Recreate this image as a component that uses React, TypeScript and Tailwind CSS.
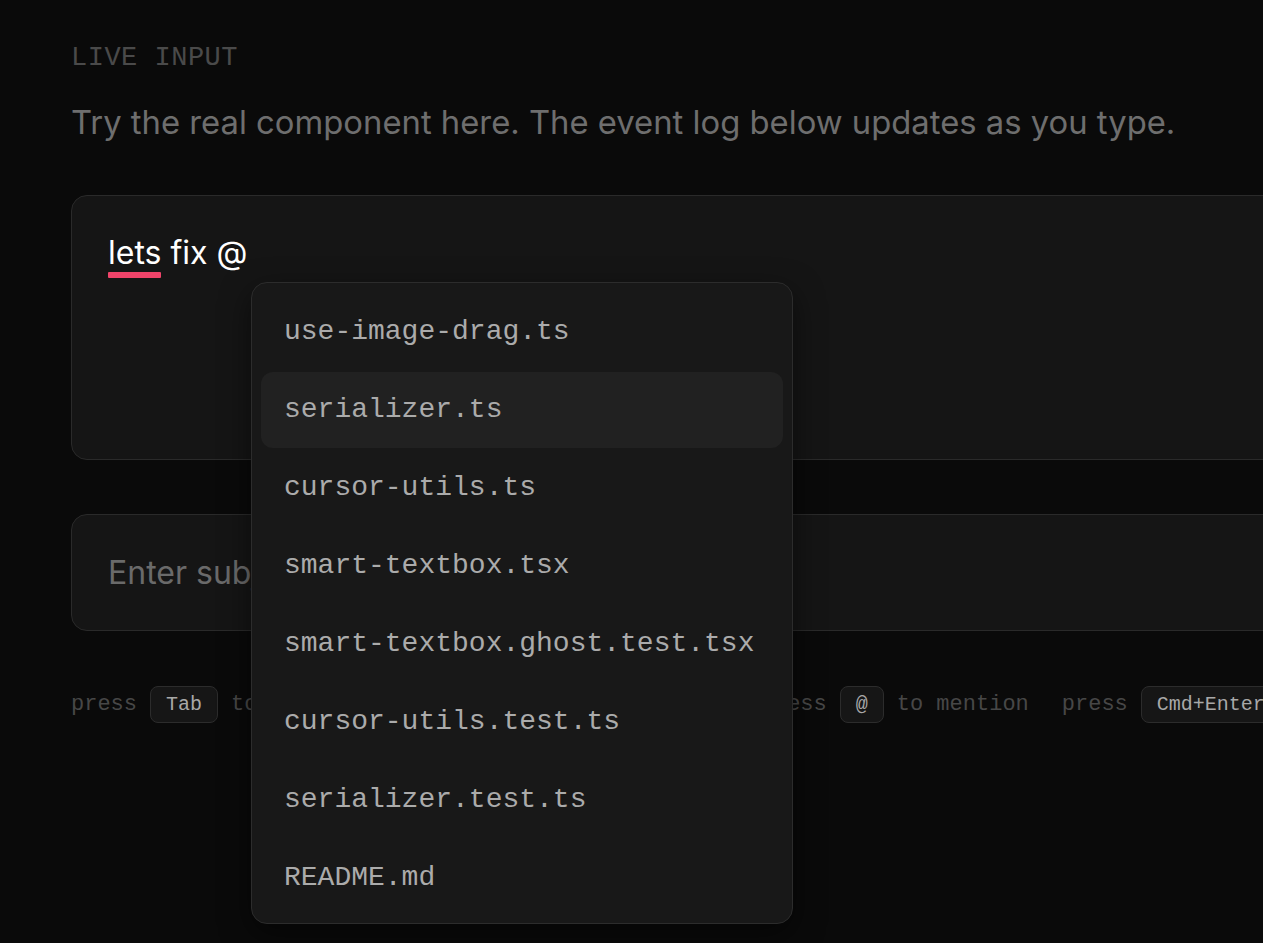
import React from "react";

const files = [
  "use-image-drag.ts",
  "serializer.ts",
  "cursor-utils.ts",
  "smart-textbox.tsx",
  "smart-textbox.ghost.test.tsx",
  "cursor-utils.test.ts",
  "serializer.test.ts",
  "README.md",
];

const mono = "font-['Liberation_Mono','DejaVu_Sans_Mono',monospace]";

function Kbd({ children }: { children: React.ReactNode }) {
  return (
    <span className="inline-flex h-[37px] items-center rounded-[8px] border border-[#2c2c2c] bg-[#161616] px-[15px] text-[20px] text-[#a8a8a8]">
      {children}
    </span>
  );
}

function Hint({ k, action }: { k: string; action: string }) {
  return (
    <div className="flex shrink-0 items-center gap-[13px] whitespace-nowrap">
      <span>press</span>
      <Kbd>{k}</Kbd>
      <span>{action}</span>
    </div>
  );
}

export default function App() {
  return (
    <div className="h-[943px] w-[1263px] overflow-hidden bg-[#0a0a0a] font-['Inter','Noto_Sans',sans-serif]">
      <div className="w-[1500px] pl-[71px] pt-[42px]">
        <div className={`${mono} text-[27px] leading-[32px] tracking-[0.5px] text-[#4a4a4a]`}>
          LIVE INPUT
        </div>
        <p className="mt-[28px] text-[32.8px] leading-[40px] text-[#6e6e6e]">
          Try the real component here. The event log below updates as you type.
        </p>

        <div className="relative mt-[53px] w-[1300px]">
          <div className="h-[265px] rounded-[16px] border border-[#2a2a2a] bg-[#151515] px-[36px] pt-[37px]">
            <div className="text-[32px] leading-[40px] text-white">
              <span className="relative inline-block">
                lets
                <span className="absolute left-0 right-0 top-[39px] h-[6px] rounded-[1px] bg-[#f0446a]" />
              </span>{" "}
              fix @
            </div>
          </div>

          <div className="mt-[54px] flex h-[117px] items-center rounded-[16px] border border-[#2a2a2a] bg-[#151515] px-[36px]">
            <span className="text-[32px] text-[#6a6a6a]">Enter subject...</span>
          </div>

          <div className={`${mono} mt-[55px] flex items-center gap-[33px] text-[22px] text-[#474747]`}>
            <Hint k="Tab" action="to accept" />
            <Hint k="Esc" action="to dismiss all" />
            <Hint k="@" action="to mention" />
            <Hint k="Cmd+Enter" action="to submit" />
          </div>

          <div className="absolute left-[180px] top-[87px] w-[542px] rounded-[16px] border border-[#2c2c2c] bg-[#181818] px-[9px] pb-[7px] pt-[11px] shadow-[0_10px_30px_rgba(0,0,0,0.5)]">
            <div className="flex flex-col gap-[2px]">
              {files.map((f, i) => (
                <div
                  key={f}
                  className={`${mono} flex h-[76px] items-center rounded-[12px] px-[23px] text-[28px] text-[#ababab] ${
                    i === 1 ? "bg-[#212121]" : ""
                  }`}
                >
                  {f}
                </div>
              ))}
            </div>
          </div>
        </div>
      </div>
    </div>
  );
}
